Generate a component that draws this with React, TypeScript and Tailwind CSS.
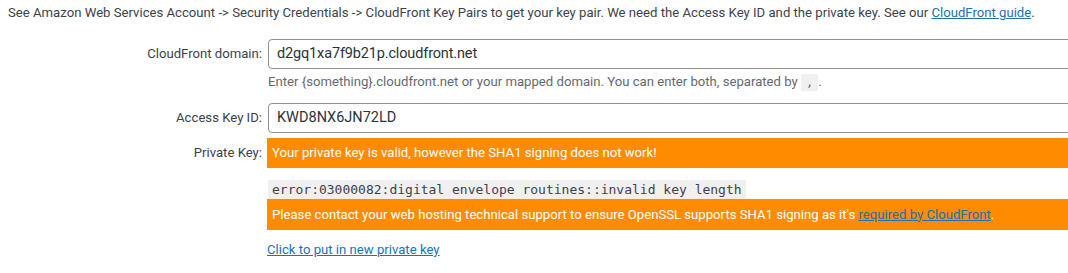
export default function App() {
  const sans = { fontFamily: 'Roboto, "Noto Sans", sans-serif' };
  const mono = { fontFamily: '"DejaVu Sans Mono", monospace' };
  return (
    <div className="w-[1068px] h-[273px] overflow-hidden bg-white text-[13.15px] text-[#3c434a]" style={sans}>
      <div className="pl-[8px] pt-[4px] h-[22px] leading-[18px] whitespace-nowrap">
        See Amazon Web Services Account -&gt; Security Credentials -&gt; CloudFront Key Pairs to get your key pair. We need the Access Key ID and the private key. See our{" "}
        <a href="#" className="text-[#2271b1] underline">CloudFront guide</a>.
      </div>
      <div className="flex flex-col mt-[17px]">
        <div className="flex items-center">
          <div className="w-[262px] text-right shrink-0">CloudFront domain:</div>
          <div className="ml-[6px] w-[900px] h-[30px] shrink-0 border border-[#8c8f94] rounded-[4px] flex items-center pl-[8px] text-[14.5px] tracking-[-0.15px] text-[#2c3338]">
            d2gq1xa7f9b21p.cloudfront.net
          </div>
        </div>
        <div className="ml-[268px] mt-[4px] h-[18px] text-[#646970] leading-[18px] whitespace-nowrap flex items-center">
          <span>
            Enter {"{something}"}.cloudfront.net or your mapped domain. You can enter both, separated by&nbsp;
          </span>
          <span className="bg-[#f0f0f1] px-[5px] h-[17px] leading-[17px] inline-block text-[12px]" style={mono}>,</span>
          <span>.</span>
        </div>
        <div className="flex items-center mt-[12px]">
          <div className="w-[262px] text-right shrink-0">Access Key ID:</div>
          <div className="ml-[6px] w-[900px] h-[30px] shrink-0 border border-[#8c8f94] rounded-[4px] flex items-center pl-[8px] text-[14.5px] text-[#2c3338]">
            KWD8NX6JN72LD
          </div>
        </div>
        <div className="flex mt-[5px]">
          <div className="w-[262px] text-right shrink-0 h-[30px] flex items-center justify-end">Private Key:</div>
          <div className="ml-[5px] flex flex-col shrink-0 w-[900px]">
            <div className="h-[30px] bg-[#ff8c00] text-white flex items-center pl-[5px]">
              Your private key is valid, however the SHA1 signing does not work!
            </div>
            <div className="mt-[12px] ml-[1px] self-start bg-[#f0f0f1] h-[19px] flex items-center px-[4px] text-[13px] text-[#3c434a]" style={mono}>
              error:03000082:digital envelope routines::invalid key length
            </div>
            <div className="h-[31px] bg-[#ff8c00] text-white flex items-center pl-[5px] whitespace-nowrap">
              Please contact your web hosting technical support to ensure OpenSSL supports SHA1 signing as it's&nbsp;
              <a href="#" className="text-[#2271b1] underline">required by CloudFront</a>.
            </div>
            <div className="mt-[11px] leading-[18px]">
              <a href="#" className="text-[#2271b1] underline">Click to put in new private key</a>
            </div>
          </div>
        </div>
      </div>
    </div>
  );
}
